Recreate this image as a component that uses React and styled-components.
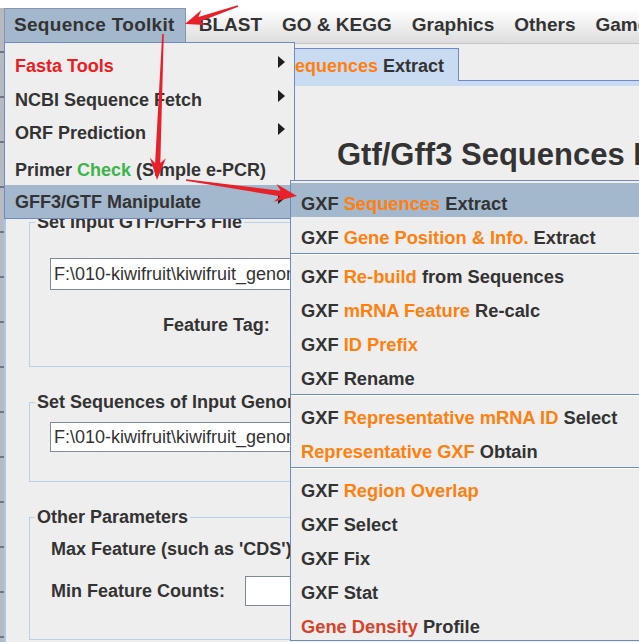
import React from 'react'
import styled, { createGlobalStyle } from 'styled-components'

const GlobalStyle = createGlobalStyle`
  html, body {
    margin: 0;
    padding: 0;
    background: #fff;
  }
  body {
    font-family: 'Liberation Sans', Arial, sans-serif;
    overflow: hidden;
  }
  * { box-sizing: border-box; }
`

const ORANGE = '#ff7f0f'
const DARK = '#333333'
const MENU_BORDER = '#6d8ac4'
const SELECTED = '#a3b8cc'

const Screen = styled.div`
  position: relative;
  width: 639px;
  height: 642px;
  overflow: hidden;
  display: flex;
  background: #fff;
`

const BackWindow = styled.div`
  width: 4px;
  flex: none;
  margin-top: 8px;
  background: repeating-linear-gradient(to bottom, #b7bac0 0 43px, #707784 43px 45px);
`

const Window = styled.div`
  flex: 1;
  min-width: 0;
  display: flex;
  flex-direction: column;
  overflow: hidden;
`

const MenuBar = styled.div`
  height: 44px;
  flex: none;
  display: flex;
  align-items: flex-end;
  background: linear-gradient(to bottom, #ffffff 20%, #dddddd 100%);
  border-bottom: 1px solid #c6c6c6;
  white-space: nowrap;
`

const MenuTitle = styled.div`
  height: 35px;
  display: flex;
  align-items: center;
  margin-right: ${p => (p.$active ? 3 : 0)}px;
  padding: ${p => (p.$active ? '0 10px 2px 9px' : '0 10px 2px')};
  font-weight: bold;
  font-size: 19px;
  letter-spacing: ${p => (p.$active ? '0.3px' : '0')};
  color: ${DARK};
  background: ${p => (p.$active ? SELECTED : 'transparent')};
  border: ${p => (p.$active ? '1px solid #8497ad' : 'none')};
  border-bottom: none;
`

const Content = styled.div`
  flex: 1;
  background: #eeeeee;
  border-left: 2px solid #a9c7ee;
  white-space: nowrap;
`

const TabRow = styled.div`
  margin-top: 4px;
  height: 33px;
  display: flex;
`

const TabLine = styled.div`
  flex: ${p => (p.$grow ? '1' : 'none')};
  width: ${p => (p.$grow ? 'auto' : '220px')};
  border-bottom: 1px solid ${MENU_BORDER};
`

const Tab = styled.div`
  display: flex;
  align-items: center;
  padding: 3px 14px 0;
  background: #c8dbf0;
  border: 1px solid ${MENU_BORDER};
  border-bottom: none;
  font-weight: bold;
  font-size: 18px;
  color: ${DARK};
`

const TabBand = styled.div`
  height: 5px;
  background: #c8dbf0;
`

const Title = styled.h1`
  margin: 52px 0 0;
  padding-left: 331px;
  font-size: 31px;
  line-height: 34px;
  font-weight: bold;
  color: ${DARK};
`

const Panel = styled.fieldset`
  margin: ${p => p.$top}px 0 0 23px;
  width: 600px;
  padding: 0 0 ${p => p.$bottom}px 5px;
  border: 1px solid #b8d0ea;
  min-inline-size: 0;
`

const Legend = styled.legend`
  padding: 0 2px;
  font-weight: bold;
  font-size: 18px;
  line-height: 20px;
  color: ${DARK};
`

const PanelBody = styled.div`
  padding-left: 15px;
`

const Field = styled.div`
  margin-top: ${p => p.$top}px;
  width: ${p => p.$width || 400}px;
  height: ${p => p.$height || 31}px;
  display: flex;
  align-items: center;
  padding-left: 3px;
  background: #fff;
  border: 1px solid #7c8b9b;
  box-shadow: inset 1px 1px 0 #ffffff;
  font-size: 18px;
  color: ${DARK};
  overflow: hidden;
`

const Label = styled.div`
  margin: ${p => p.$top || 0}px 0 0 ${p => p.$left || 0}px;
  height: 30px;
  display: flex;
  align-items: center;
  font-weight: bold;
  font-size: 18px;
  color: ${DARK};
`

const FormRow = styled.div`
  display: flex;
  align-items: center;
  gap: 20px;
  margin-top: ${p => p.$top}px;
`

const Popup = styled.div`
  position: absolute;
  left: ${p => p.$left}px;
  top: ${p => p.$top}px;
  width: ${p => p.$width}px;
  padding-top: ${p => p.$pad}px;
  background: #eeeeee;
  border: 1px solid ${MENU_BORDER};
  white-space: nowrap;
  z-index: 2;
`

const Item = styled.div`
  height: ${p => p.$h}px;
  margin-top: ${p => p.$gap || 0}px;
  display: flex;
  align-items: center;
  padding: ${p => p.$padTop}px 0 0 10px;
  font-weight: bold;
  font-size: ${p => p.$size}px;
  color: ${DARK};
  background: ${p => (p.$active ? SELECTED : 'transparent')};
`

const ItemText = styled.span`
  white-space: pre;
`

const Arrow = styled.span`
  margin: 0 9px 9px auto;
  width: 0;
  height: 0;
  border-left: 7px solid #1e1e1e;
  border-top: 6.5px solid transparent;
  border-bottom: 6.5px solid transparent;
`

const Separator = styled.div`
  margin: 2px 0 1px;
  height: 2px;
  border-top: 1px solid ${MENU_BORDER};
  border-bottom: 1px solid #ffffff;
`

const C = styled.span`
  color: ${p => p.$c};
  white-space: pre;
`

const Overlay = styled.svg`
  position: absolute;
  left: 0;
  top: 0;
  width: 639px;
  height: 642px;
  pointer-events: none;
  z-index: 5;
`

// tapered screenshot-style arrow from tail to tip
const arrowPoints = (x1, y1, x2, y2, head = 20, headW = 8, neckW = 2.6, tailW = 0.8) => {
  const dx = x2 - x1
  const dy = y2 - y1
  const len = Math.hypot(dx, dy)
  const ux = dx / len
  const uy = dy / len
  const px = -uy
  const py = ux
  const nx = x2 - ux * (head - 5)
  const ny = y2 - uy * (head - 5)
  const bx = x2 - ux * head
  const by = y2 - uy * head
  return [
    [x1 + px * tailW, y1 + py * tailW],
    [nx + px * neckW, ny + py * neckW],
    [bx + px * headW, by + py * headW],
    [x2, y2],
    [bx - px * headW, by - py * headW],
    [nx - px * neckW, ny - py * neckW],
    [x1 - px * tailW, y1 - py * tailW]
  ].map(p => p.map(v => v.toFixed(1)).join(',')).join(' ')
}

const menuTitles = ['Sequence Toolkit', 'BLAST', 'GO & KEGG', 'Graphics', 'Others', 'Games']

const path = 'F:\\010-kiwifruit\\kiwifruit_genome\\Red5.gff3'
const fasta = 'F:\\010-kiwifruit\\kiwifruit_genome\\Red5_genome.fa'

const gxf = [
  { parts: [['GXF ', DARK], ['Sequences', ORANGE], [' Extract', DARK]], active: true },
  { parts: [['GXF ', DARK], ['Gene Position & Info.', ORANGE], [' Extract', DARK]] },
  'sep',
  { parts: [['GXF ', DARK], ['Re-build', ORANGE], [' from Sequences', DARK]] },
  { parts: [['GXF ', DARK], ['mRNA Feature', ORANGE], [' Re-calc', DARK]] },
  { parts: [['GXF ', DARK], ['ID Prefix', ORANGE]] },
  { parts: [['GXF Rename', DARK]] },
  'sep',
  { parts: [['GXF ', DARK], ['Representative mRNA ID', ORANGE], [' Select', DARK]] },
  { parts: [['Representative GXF', ORANGE], [' Obtain', DARK]] },
  'sep',
  { parts: [['GXF ', DARK], ['Region Overlap', ORANGE]] },
  { parts: [['GXF Select', DARK]] },
  { parts: [['GXF Fix', DARK]] },
  { parts: [['GXF Stat', DARK]] },
  { parts: [['Gene Density', '#d8432b'], [' Profile', DARK]] }
]

export default function App() {
  return (
    <Screen>
      <GlobalStyle />
      <BackWindow />
      <Window>
        <MenuBar>
          {menuTitles.map((t, i) => (
            <MenuTitle key={t} $active={i === 0}>{t}</MenuTitle>
          ))}
        </MenuBar>
        <Content>
          <TabRow>
            <TabLine />
            <Tab>GXF&nbsp;<C $c={ORANGE}>Sequences</C>&nbsp;Extract</Tab>
            <TabLine $grow />
          </TabRow>
          <TabBand />
          <Title>Gtf/Gff3 Sequences Extract</Title>

          <Panel $top={40} $bottom={26}>
            <Legend>Set Input GTF/GFF3 File</Legend>
            <PanelBody>
              <Field $top={26} $height={32} $width={480}>{path}</Field>
              <Label $top={20} $left={113}>Feature Tag:</Label>
            </PanelBody>
          </Panel>

          <Panel $top={25} $bottom={29}>
            <Legend>Set Sequences of Input Genome</Legend>
            <PanelBody>
              <Field $top={10} $height={30} $width={480}>{fasta}</Field>
            </PanelBody>
          </Panel>

          <Panel $top={25} $bottom={33}>
            <Legend>Other Parameters</Legend>
            <PanelBody>
              <Label $top={7} $left={1}>Max Feature (such as 'CDS') Extracted:</Label>
              <FormRow $top={12}>
                <Label $left={1}>Min Feature Counts:</Label>
                <Field $top={0} $height={30} $width={120} />
              </FormRow>
            </PanelBody>
          </Panel>
        </Content>
      </Window>

      <Popup $left={4} $top={42} $width={291} $pad={6}>
        <Item $h={33} $padTop={2} $size={18}><C $c="#ec1c24">Fasta Tools</C><Arrow /></Item>
        <Item $h={33} $padTop={4} $size={18}>NCBI Sequence Fetch<Arrow /></Item>
        <Item $h={33} $padTop={3} $size={18}>ORF Prediction<Arrow /></Item>
        <Item $h={33} $padTop={3} $size={18} $gap={4}>
          <ItemText>Primer <C $c="#3db54a">Check</C> (Simple e-PCR)</ItemText>
        </Item>
        <Item $h={33} $padTop={1} $size={18} $active>GFF3/GTF Manipulate<Arrow /></Item>
      </Popup>

      <Popup $left={290} $top={180} $width={380} $pad={2}>
        {gxf.map((it, i) =>
          it === 'sep' ? (
            <Separator key={i} />
          ) : (
            <Item key={i} $h={34} $padTop={8} $size={18.3} $active={it.active}>
              {it.parts.map(([txt, col], j) => (
                <C key={j} $c={col}>{txt}</C>
              ))}
            </Item>
          )
        )}
      </Popup>

      <Overlay viewBox="0 0 639 642">
        <polygon points={arrowPoints(238, 6, 185, 24, 20, 8, 2.4)} fill="#e8202a" />
        <polygon points={arrowPoints(163, 34, 157, 180, 22, 8, 2.6)} fill="#e8202a" />
        <polygon points={arrowPoints(186, 180, 297, 196, 22, 9, 2.8)} fill="#e8202a" />
      </Overlay>
    </Screen>
  )
}
